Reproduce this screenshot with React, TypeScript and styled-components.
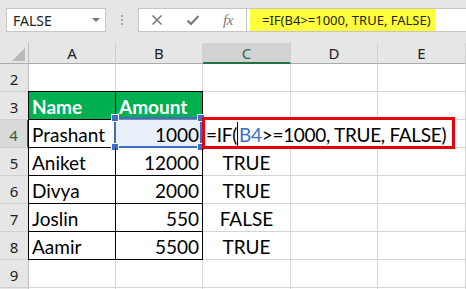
import React from 'react';
import styled, { createGlobalStyle, css } from 'styled-components';

const Global = createGlobalStyle`
  html, body { margin: 0; padding: 0; background: #fff; }
  body { width: 466px; height: 289px; overflow: hidden; font-family: "Noto Sans", sans-serif; }
`;

const Page = styled.div`
  width: 466px;
  height: 289px;
  overflow: hidden;
  background: #fff;
  display: flex;
  flex-direction: column;
`;

const Toolbar = styled.div`
  height: 43px;
  flex: none;
  box-sizing: border-box;
  background: #e6e6e6;
  display: flex;
  align-items: flex-start;
  padding: 8px 0 0 6px;
`;

const NameBox = styled.div`
  width: 100px;
  height: 24px;
  box-sizing: border-box;
  background: #fff;
  border: 1px solid #c6c6c6;
  display: flex;
  align-items: center;
  justify-content: space-between;
  padding: 0 5px 0 6px;
  font-family: "Noto Sans", sans-serif;
  font-size: 14px;
  color: #222;
`;

const Caret = styled.span`
  width: 0;
  height: 0;
  border-left: 4px solid transparent;
  border-right: 4px solid transparent;
  border-top: 4px solid #777;
`;

const Grip = styled.div`
  width: 32px;
  height: 24px;
  display: flex;
  flex-direction: column;
  align-items: center;
  justify-content: center;
  gap: 2px;
`;

const Dot = styled.span`
  width: 2px;
  height: 2px;
  background: #a9a9a9;
`;

const FormulaBar = styled.div`
  flex: 1;
  height: 24px;
  box-sizing: border-box;
  display: flex;
  background: #fff;
  border: 1px solid #c6c6c6;
  border-right: none;
`;

const IconArea = styled.div`
  width: 108px;
  flex: none;
  display: flex;
  align-items: center;
  padding-left: 8px;
  gap: 15.5px;
  box-sizing: border-box;
  border-right: 1px solid #c6c6c6;
`;

const IconBox = styled.span`
  width: 20px;
  height: 20px;
  display: flex;
  align-items: center;
  justify-content: center;
  color: #7a7a7a;
`;

const Fx = styled.span`
  font-family: "Liberation Serif", serif;
  font-style: italic;
  font-size: 15px;
  color: #7a7a7a;
  letter-spacing: -0.5px;
`;

const FormulaContent = styled.div`
  flex: 1;
  display: flex;
  align-items: stretch;
  padding-left: 3px;
`;

const Highlight = styled.span`
  display: flex;
  align-items: center;
  background: #ffff3c;
  padding: 0 4px 0 12px;
  font-family: "Noto Sans", sans-serif;
  font-size: 13px;
  color: #222;
  white-space: nowrap;
`;

const Sheet = styled.div`
  flex: 1;
  display: grid;
  grid-template-columns: 29px 87px 87px 88px 87px 1fr;
  grid-template-rows: 21px repeat(9, 28px);
`;

const Corner = styled.div`
  background: #e6e6e6;
  border-right: 1px solid #bdbdbd;
  border-bottom: 1px solid #ababab;
  box-sizing: border-box;
  display: flex;
  align-items: flex-end;
  justify-content: flex-end;
  padding: 0 3px 2px 0;
`;

const SelectAll = styled.span`
  width: 0;
  height: 0;
  border-left: 13px solid transparent;
  border-bottom: 13px solid #b9b9b9;
`;

const ColHeader = styled.div<{ $active?: boolean }>`
  box-sizing: border-box;
  background: ${p => (p.$active ? '#d2d2d2' : '#e6e6e6')};
  border-right: 1px solid #cfcfcf;
  border-bottom: ${p => (p.$active ? '2px solid #217346' : '1px solid #ababab')};
  display: flex;
  align-items: center;
  justify-content: center;
  font-family: "Noto Sans", sans-serif;
  font-size: 15px;
  color: ${p => (p.$active ? '#1e6b56' : '#222')};
  padding-top: ${p => (p.$active ? '1px' : '0')};
`;

const RowHeader = styled.div<{ $active?: boolean }>`
  box-sizing: border-box;
  background: ${p => (p.$active ? '#dadada' : '#e6e6e6')};
  border-right: ${p => (p.$active ? '2px solid #217346' : '1px solid #bdbdbd')};
  border-bottom: 1px solid #cfcfcf;
  display: flex;
  align-items: center;
  justify-content: center;
  padding-top: 3px;
  font-family: "Noto Sans", sans-serif;
  font-size: 15px;
  color: ${p => (p.$active ? '#3b5a4e' : '#222')};
`;

type Align = 'left' | 'right' | 'center';

const Cell = styled.div<{ $align?: Align; $table?: boolean; $left?: boolean; $top?: boolean; $head?: boolean }>`
  position: relative;
  box-sizing: border-box;
  border-right: 1px solid #d4d4d4;
  border-bottom: 1px solid #d4d4d4;
  display: flex;
  align-items: center;
  justify-content: ${p => (p.$align === 'right' ? 'flex-end' : p.$align === 'center' ? 'center' : 'flex-start')};
  padding: 2px 3px 0 3px;
  font-family: Lato, "Liberation Sans", sans-serif;
  font-size: 19px;
  color: #000;
  white-space: nowrap;
  ${p =>
    p.$table &&
    css`
      border-right-color: #000;
      border-bottom-color: #000;
    `}
  ${p =>
    p.$head &&
    css`
      background: #00b050;
      color: #fff;
      font-weight: 700;
    `}
  ${p => {
    const shadows: string[] = [];
    if (p.$left) shadows.push('-1px 0 0 #000');
    if (p.$top) shadows.push('0 -1px 0 #000');
    if (p.$left && p.$top) shadows.push('-1px -1px 0 #000');
    return shadows.length ? css`box-shadow: ${shadows.join(', ')};` : '';
  }}
`;

const RefRange = styled.div`
  position: absolute;
  left: -2px;
  top: -3px;
  right: 0;
  bottom: -1px;
  border: 2px solid #3c6fcb;
  background: rgba(220, 230, 246, 0.6);
  z-index: 0;
`;

const Handle = styled.span<{ $x: 'l' | 'r'; $y: 't' | 'b' }>`
  position: absolute;
  width: 6px;
  height: 6px;
  background: #3c6fcb;
  border: 1px solid #fff;
  box-sizing: content-box;
  ${p => (p.$x === 'l' ? 'left: -5px;' : 'right: -5px;')}
  ${p => (p.$y === 't' ? 'top: -5px;' : 'bottom: -5px;')}
`;

const CellText = styled.span`
  position: relative;
  z-index: 1;
`;

const EditBox = styled.div`
  position: absolute;
  left: -1px;
  top: -3px;
  width: 253px;
  height: 32px;
  box-sizing: border-box;
  border: 3px solid #e8000b;
  background: #fff;
  z-index: 2;
  display: flex;
  align-items: center;
  padding: 2px 0 0 1px;
  font-family: Lato, "Liberation Sans", sans-serif;
  font-size: 19px;
  letter-spacing: -0.3px;
  color: #000;
  white-space: nowrap;
`;

const RefText = styled.span`
  color: #3a72cf;
`;

const Cursor = styled.span`
  display: inline-block;
  width: 1px;
  height: 24px;
  background: #000;
  margin: 0 1px 0 0;
  align-self: center;
`;

const CloseIcon = () => (
  <svg width="12" height="12" viewBox="0 0 12 12">
    <path d="M1.5 1.5 L10.5 10.5 M10.5 1.5 L1.5 10.5" stroke="currentColor" strokeWidth="1.6" fill="none" />
  </svg>
);

const CheckIcon = () => (
  <svg width="14" height="12" viewBox="0 0 14 12">
    <path d="M1.5 6.5 L5 10 L12.5 2" stroke="currentColor" strokeWidth="2.2" fill="none" />
  </svg>
);

type Row = { n: number; label?: string; a?: string; b?: string; c?: string; head?: boolean; table?: boolean; edit?: boolean };

const rows: Row[] = [
  { n: 2 },
  { n: 3, a: 'Name', b: 'Amount', head: true, table: true },
  { n: 4, a: 'Prashant', b: '1000', edit: true, table: true },
  { n: 5, a: 'Aniket', b: '12000', c: 'TRUE', table: true },
  { n: 6, a: 'Divya', b: '2000', c: 'TRUE', table: true },
  { n: 7, a: 'Joslin', b: '550', c: 'FALSE', table: true },
  { n: 8, a: 'Aamir', b: '5500', c: 'TRUE', table: true },
  { n: 9 },
  { n: 10, label: '' },
];

const columns = ['A', 'B', 'C', 'D', 'E'];

export default function App() {
  return (
    <>
      <Global />
      <Page>
        <Toolbar>
          <NameBox>
            <span>FALSE</span>
            <Caret />
          </NameBox>
          <Grip>
            <Dot />
            <Dot />
            <Dot />
          </Grip>
          <FormulaBar>
            <IconArea>
              <IconBox>
                <CloseIcon />
              </IconBox>
              <IconBox>
                <CheckIcon />
              </IconBox>
              <IconBox>
                <Fx>fx</Fx>
              </IconBox>
            </IconArea>
            <FormulaContent>
              <Highlight>=IF(B4&gt;=1000, TRUE, FALSE)</Highlight>
            </FormulaContent>
          </FormulaBar>
        </Toolbar>
        <Sheet>
          <Corner>
            <SelectAll />
          </Corner>
          {columns.map(c => (
            <ColHeader key={c} $active={c === 'C'}>
              {c}
            </ColHeader>
          ))}
          {rows.map(r => (
            <React.Fragment key={r.n}>
              <RowHeader $active={r.n === 4}>{r.label ?? r.n}</RowHeader>
              <Cell $table={r.table} $left={r.table} $top={r.n === 3} $head={r.head}>
                {r.a}
              </Cell>
              <Cell $align={r.head ? 'left' : 'right'} $table={r.table} $top={r.n === 3} $head={r.head}>
                {r.n === 4 && (
                  <RefRange>
                    <Handle $x="l" $y="t" />
                    <Handle $x="l" $y="b" />
                    <Handle $x="r" $y="t" />
                    <Handle $x="r" $y="b" />
                  </RefRange>
                )}
                <CellText>{r.b}</CellText>
              </Cell>
              <Cell $align="center">
                {r.edit ? (
                  <EditBox>
                    =IF(
                    <Cursor />
                    <RefText>B4</RefText>&gt;=1000, TRUE, FALSE)
                  </EditBox>
                ) : (
                  r.c
                )}
              </Cell>
              <Cell />
              <Cell />
            </React.Fragment>
          ))}
        </Sheet>
      </Page>
    </>
  );
}
